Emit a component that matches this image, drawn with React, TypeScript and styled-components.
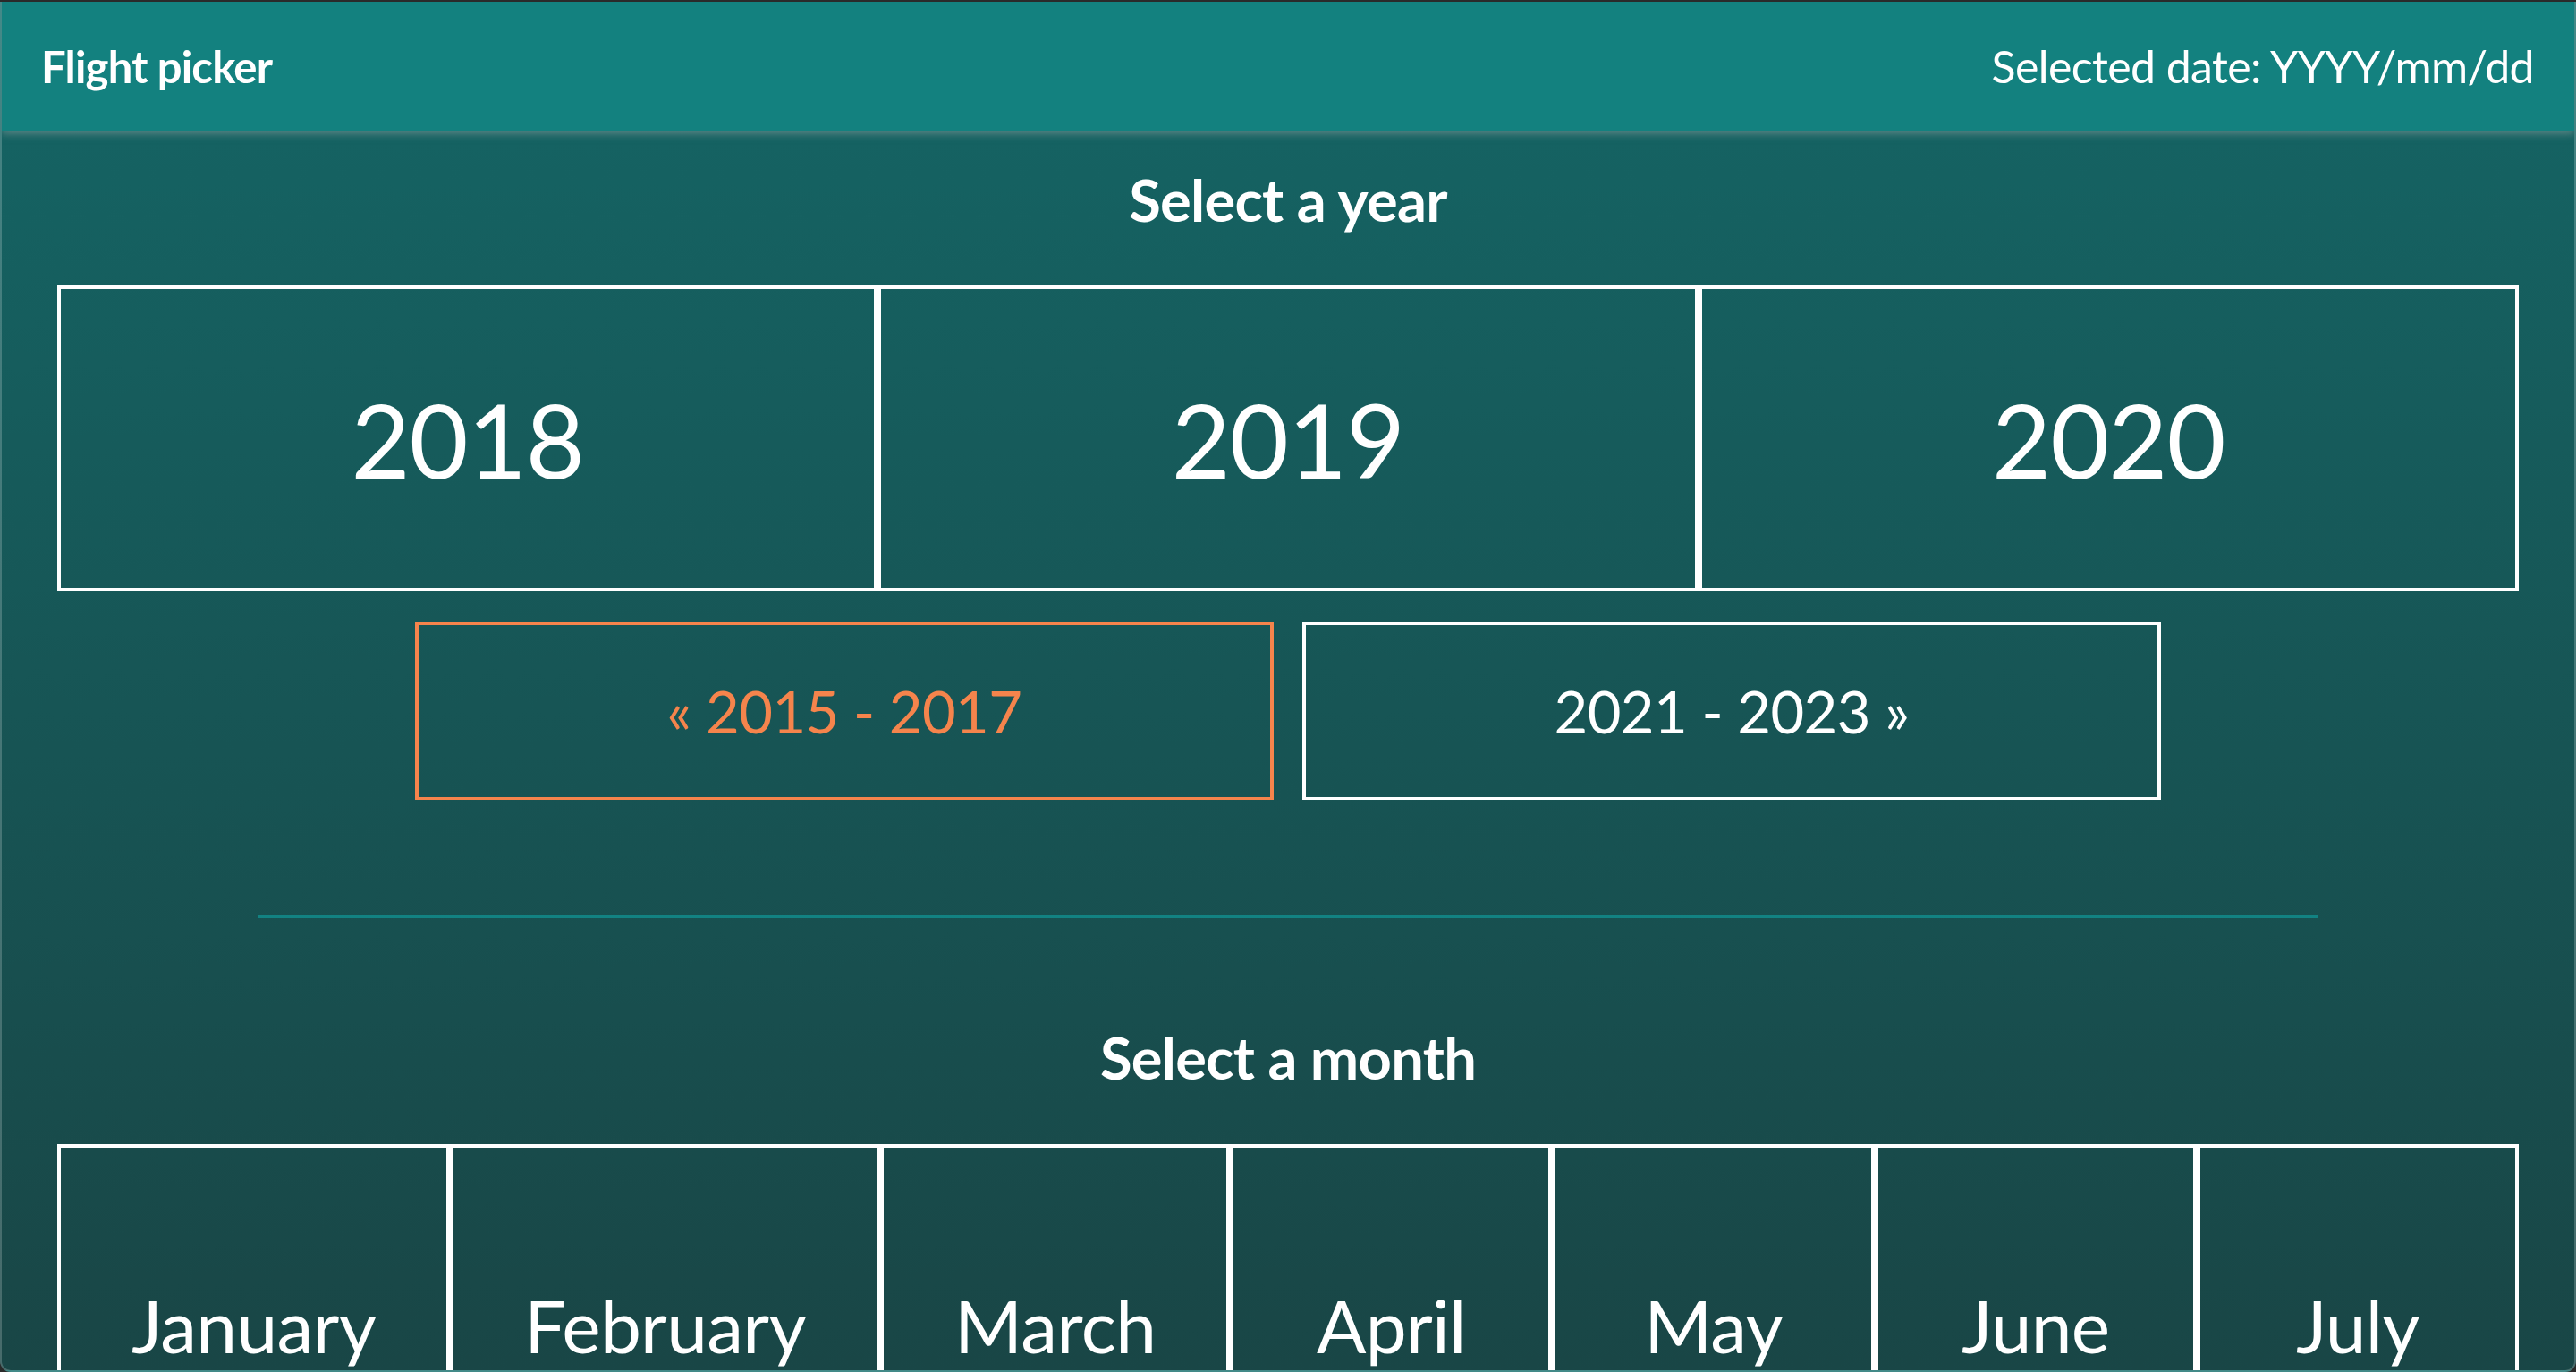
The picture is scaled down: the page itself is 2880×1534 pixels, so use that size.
import React from "react";
import styled, { createGlobalStyle } from "styled-components";

const GlobalStyle = createGlobalStyle`
  html, body {
    margin: 0;
    padding: 0;
    background: #2a2a2a;
    overflow: hidden;
  }
  * { box-sizing: border-box; }
  body {
    font-family: Lato, "Open Sans", "Liberation Sans", sans-serif;
    color: #ffffff;
  }
`;

const Window = styled.div`
  margin-top: 2px;
  height: calc(100vh - 2px);
  display: flex;
  flex-direction: column;
  overflow: hidden;
  border: 2px solid rgba(255, 255, 255, 0.2);
  border-top: none;
  border-radius: 0 0 12px 12px;
  background: linear-gradient(to bottom, #146d6b 0%, #156262 10%, #194646 100%);
`;

const Header = styled.header`
  position: relative;
  z-index: 2;
  flex: 0 0 144px;
  height: 144px;
  display: flex;
  align-items: center;
  justify-content: space-between;
  padding: 0 45px 0 44px;
  background: #13817f;
  box-shadow: 0 3px 9px rgba(175, 175, 175, 0.5);
`;

const Brand = styled.div`
  font-size: 49px;
  font-weight: 700;
  letter-spacing: -0.8px;
`;

const SelectedDate = styled.div`
  font-size: 50px;
  font-weight: 400;
  letter-spacing: -0.6px;
`;

const Main = styled.main`
  flex: 1 1 auto;
  display: flex;
  flex-direction: column;
  align-items: center;
  padding: 0 62px;
`;

const SectionTitle = styled.h2<{ $top: number }>`
  margin: ${(p) => p.$top}px 0 0;
  font-size: 65px;
  line-height: 80px;
  font-weight: 700;
  letter-spacing: -0.7px;
  text-align: center;
`;

const YearRow = styled.div`
  align-self: stretch;
  display: flex;
  margin-top: 56px;
`;

const YearCell = styled.button`
  flex: 1 1 0;
  height: 342px;
  display: flex;
  align-items: center;
  justify-content: center;
  background: transparent;
  border: 4px solid #ffffff;
  color: #ffffff;
  font-family: inherit;
  font-size: 114px;
  font-weight: 400;
  letter-spacing: -1px;
  cursor: pointer;
`;

const NavRow = styled.div`
  display: flex;
  justify-content: center;
  gap: 32px;
  margin-top: 34px;
`;

const NavButton = styled.button<{ $active?: boolean }>`
  width: 960px;
  height: 200px;
  display: flex;
  align-items: center;
  justify-content: center;
  background: transparent;
  border: 4px solid ${(p) => (p.$active ? "#f5844c" : "#ffffff")};
  color: ${(p) => (p.$active ? "#f5844c" : "#ffffff")};
  font-family: inherit;
  font-size: 65px;
  font-weight: 400;
  letter-spacing: -0.5px;
  cursor: pointer;
`;

const Divider = styled.hr`
  width: 2304px;
  height: 3px;
  margin: 128px 0 0;
  border: none;
  background: #128282;
`;

const MonthRow = styled.div`
  align-self: stretch;
  display: flex;
  flex-wrap: wrap;
  margin-top: 57px;
`;

const MonthCell = styled.button`
  flex: 1 1 0;
  height: 404px;
  display: flex;
  align-items: center;
  justify-content: center;
  padding: 0 79px;
  background: transparent;
  border: 4px solid #ffffff;
  color: #ffffff;
  font-family: inherit;
  font-size: 82px;
  font-weight: 400;
  letter-spacing: -0.7px;
  white-space: nowrap;
  cursor: pointer;
`;

const years = [2018, 2019, 2020];
const months = [
  "January",
  "February",
  "March",
  "April",
  "May",
  "June",
  "July",
  "August",
  "September",
  "October",
  "November",
  "December",
];

export default function App() {
  return (
    <>
      <GlobalStyle />
      <Window>
        <Header>
          <Brand>Flight picker</Brand>
          <SelectedDate>Selected date: YYYY/mm/dd</SelectedDate>
        </Header>
        <Main>
          <SectionTitle $top={37}>Select a year</SectionTitle>
          <YearRow>
            {years.map((y) => (
              <YearCell key={y}>{y}</YearCell>
            ))}
          </YearRow>
          <NavRow>
            <NavButton $active>« 2015 - 2017</NavButton>
            <NavButton>2021 - 2023 »</NavButton>
          </NavRow>
          <Divider />
          <SectionTitle $top={116}>Select a month</SectionTitle>
          <MonthRow>
            {months.map((m) => (
              <MonthCell key={m}>{m}</MonthCell>
            ))}
          </MonthRow>
        </Main>
      </Window>
    </>
  );
}
